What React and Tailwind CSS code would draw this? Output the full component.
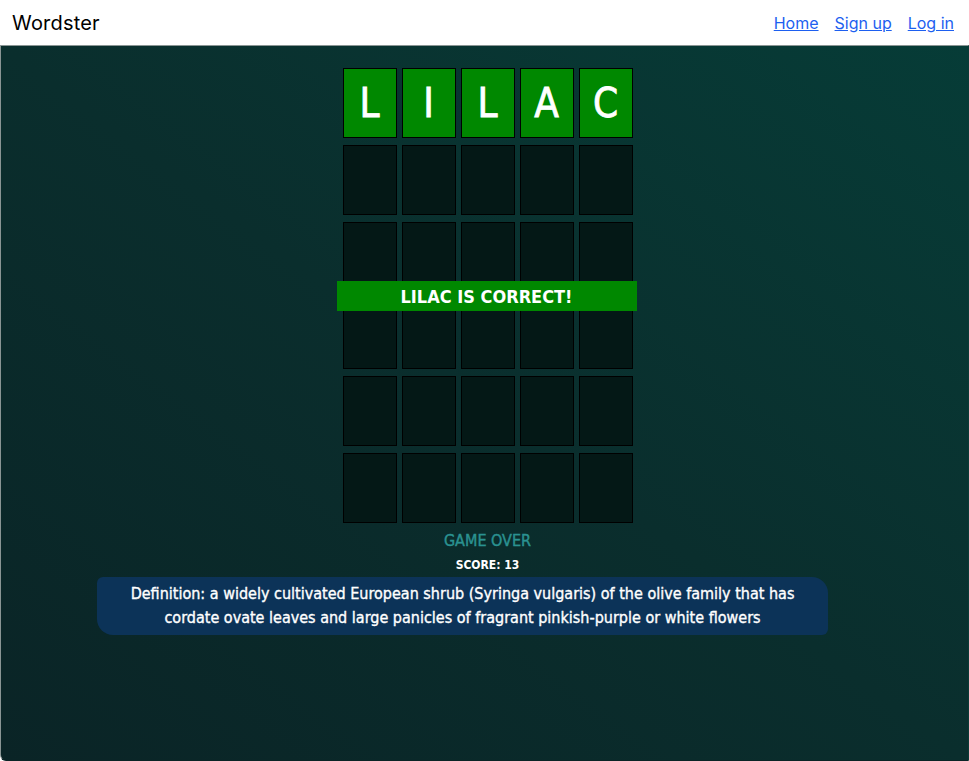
import React from "react";

const guesses = [
    ["L", "I", "L", "A", "C"],
    ["", "", "", "", ""],
    ["", "", "", "", ""],
    ["", "", "", "", ""],
    ["", "", "", "", ""],
    ["", "", "", "", ""],
];

const Tile = ({ letter, solved }) => (
    <div
        className={
            solved
                ? "flex items-center justify-center w-[54px] h-[70px] border border-black bg-[#008800] text-white text-[40px] [-webkit-text-stroke:0.8px_white]"
                : "w-[54px] h-[70px] border border-black bg-[#041816]"
        }
    >
        {letter}
    </div>
);

const App = () => {
    return (
        <div className="flex flex-col h-[761px] bg-white" style={{ fontFamily: '"DejaVu Sans Condensed", "DejaVu Sans", sans-serif' }}>
            <header className="flex items-center justify-between h-[45px] pl-3 pr-[15px] shrink-0" style={{ fontFamily: 'Inter, sans-serif' }}>
                <div className="text-[20px] text-black tracking-[0.2px]">Wordster</div>
                <nav className="flex gap-4 text-[16px]">
                    <a href="#" className="text-[#1d5ff0] underline">Home</a>
                    <a href="#" className="text-[#1d5ff0] underline">Sign up</a>
                    <a href="#" className="text-[#1d5ff0] underline">Log in</a>
                </nav>
            </header>

            <main className="grow border border-[#8a9594] border-r-[#0b3a36] border-b-[#0a2426] rounded-bl-md bg-gradient-to-tr from-[#0a2426] via-[#0a2e2d] to-[#063c37]">
                <div className="flex flex-col items-center pt-[22px]">
                    <div className="relative flex flex-col gap-[7px] ml-[6px]">
                        {guesses.map((row, r) => (
                            <div key={r} className="flex gap-[5px]">
                                {row.map((l, c) => (
                                    <Tile key={c} letter={l} solved={r === 0} />
                                ))}
                            </div>
                        ))}
                        <div className="absolute top-[213px] left-[-6px] w-[300px] h-[30px] flex items-center justify-center bg-[#008800] text-white font-bold text-[18px]">
                            LILAC IS CORRECT!
                        </div>
                    </div>
                    <div className="mt-[6px] ml-[6px] text-[16px] leading-6 text-[#2a9291] [-webkit-text-stroke:0.4px_#2a9291]">GAME OVER</div>
                    <div className="mt-[2px] ml-[6px] text-[12px] leading-5 font-bold text-white">SCORE: 13</div>
                </div>
                <div className="ml-[96px] mt-[2px] w-[731px] py-[5px] bg-[#0c3358] rounded-tl-md rounded-br-md rounded-tr-2xl rounded-bl-2xl text-center text-white text-[16px] leading-6 [-webkit-text-stroke:0.35px_white]">
                    Definition: a widely cultivated European shrub (Syringa vulgaris) of the olive family that has
                    <br />
                    cordate ovate leaves and large panicles of fragrant pinkish-purple or white flowers
                </div>
            </main>
        </div>
    );
};

export default App;
